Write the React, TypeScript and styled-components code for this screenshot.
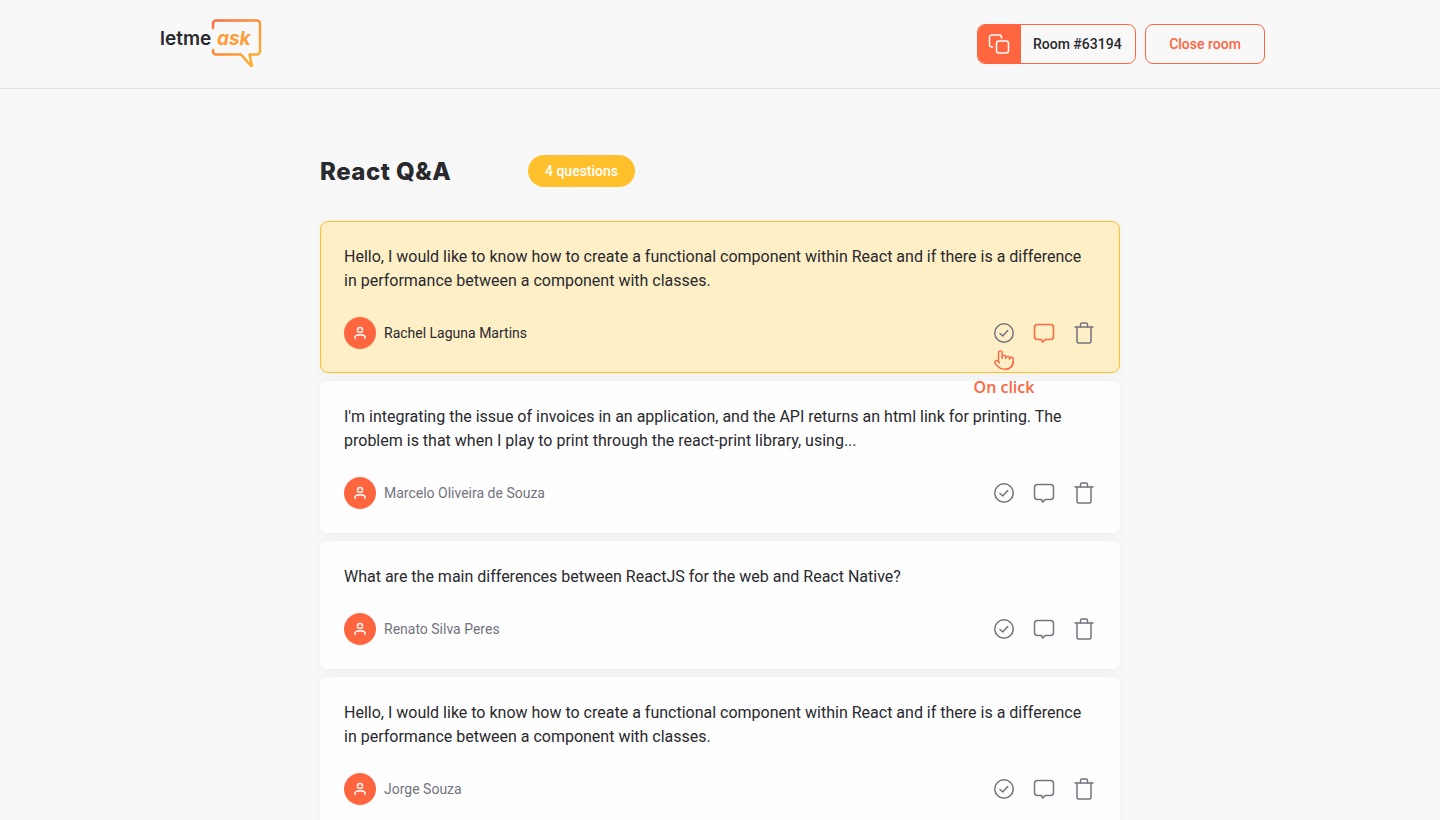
import React from "react";
import styled, { createGlobalStyle } from "styled-components";
import { Pointer } from "lucide-react";

const Global = createGlobalStyle`
  * { box-sizing: border-box; }
  html, body { margin: 0; padding: 0; height: 100%; overflow: hidden; background: #f8f8f8; }
  body { font-family: Roboto, "Liberation Sans", sans-serif; color: #29292e; }
`;

const Page = styled.div`
  height: 820px;
  overflow: hidden;
`;
const Header = styled.header`
  height: 89px;
  border-bottom: 1px solid #e2e2e2;
  padding: 0 175px 0 159px;
  display: flex;
  align-items: center;
  justify-content: space-between;
`;
const Logo = styled.div`
  position: relative;
  width: 104px;
  height: 50px;
`;
const LogoWord = styled.span<{ $accent?: boolean }>`
  position: absolute;
  top: 8px;
  left: ${(p) => (p.$accent ? "58px" : "1px")};
  font-family: Inter, "Open Sans", sans-serif;
  font-size: 19px;
  line-height: 24px;
  font-weight: ${(p) => (p.$accent ? 700 : 600)};
  font-style: ${(p) => (p.$accent ? "italic" : "normal")};
  color: ${(p) => (p.$accent ? "#ff9d3a" : "#29292e")};
`;
const LogoBubble = styled.svg`
  position: absolute;
  inset: 0;
`;
const Actions = styled.div`
  display: flex;
  gap: 9px;
`;
const RoomCode = styled.div`
  width: 159px;
  height: 40px;
  display: flex;
  border: 1px solid #ff6640;
  border-radius: 8px;
  overflow: hidden;
`;
const CopyBox = styled.div`
  width: 44px;
  margin: -1px 0 -1px -1px;
  background: #ff6640;
  display: flex;
  align-items: center;
  justify-content: center;
`;
const RoomLabel = styled.span`
  flex: 1;
  padding-left: 12px;
  font-size: 14px;
  font-weight: 500;
  line-height: 38px;
  color: #29292e;
`;
const CloseButton = styled.button`
  width: 120px;
  height: 40px;
  border: 1px solid #ff6640;
  border-radius: 8px;
  background: transparent;
  color: #ff6640;
  font-family: Roboto, sans-serif;
  font-size: 14px;
  font-weight: 500;
`;
const Main = styled.main`
  width: 800px;
  margin: 0 auto;
  padding-top: 66px;
`;
const TitleRow = styled.div`
  height: 32px;
  display: flex;
  align-items: center;
  margin-bottom: 34px;
`;
const Title = styled.h1`
  width: 208px;
  margin: 0;
  font-family: Inter, sans-serif;
  font-size: 24px;
  font-weight: 800;
  letter-spacing: 0.5px;
  color: #29292e;
`;
const Badge = styled.span`
  width: 107px;
  height: 32px;
  border-radius: 16px;
  background: #ffc02c;
  color: #fff;
  font-size: 14px;
  font-weight: 500;
  line-height: 32px;
  text-align: center;
`;
const List = styled.div`
  display: flex;
  flex-direction: column;
  gap: 8px;
`;
const Card = styled.article<{ $active?: boolean }>`
  position: relative;
  z-index: ${(p) => (p.$active ? 1 : 0)};
  border-radius: 8px;
  background: ${(p) => (p.$active ? "#feefc6" : "#fefefe")};
  border: ${(p) => (p.$active ? "1px solid #ffc02c" : "none")};
  padding: ${(p) => (p.$active ? "23px" : "24px")};
  box-shadow: 0 2px 12px rgba(0, 0, 0, 0.04);
`;
const Question = styled.p`
  margin: 0 0 24px;
  font-size: 16px;
  line-height: 24px;
  color: #29292e;
`;
const Footer = styled.div`
  height: 32px;
  display: flex;
  align-items: center;
  justify-content: space-between;
`;
const Author = styled.div`
  display: flex;
  align-items: center;
  gap: 8px;
`;
const Avatar = styled.div`
  width: 32px;
  height: 32px;
  border-radius: 50%;
  background: #ff6640;
  display: flex;
  align-items: center;
  justify-content: center;
`;
const AuthorName = styled.span<{ $active?: boolean }>`
  font-size: 14px;
  color: ${(p) => (p.$active ? "#29292e" : "#737380")};
`;
const IconRow = styled.div`
  display: flex;
  gap: 16px;
`;
const IconSlot = styled.svg`
  display: block;
  width: 24px;
  height: 24px;
  fill: none;
  stroke-width: 1.5;
  stroke-linecap: round;
  stroke-linejoin: round;
`;
const ClickHint = styled.div`
  position: absolute;
  left: 652px;
  top: 127px;
  width: 62px;
  display: flex;
  flex-direction: column;
  align-items: center;
  color: #ff6640;
`;
const HintLabel = styled.span`
  margin-top: 6px;
  font-family: "Open Sans", sans-serif;
  font-size: 16px;
  font-weight: 600;
  line-height: 20px;
  white-space: nowrap;
`;

const CheckIcon = () => (
  <IconSlot viewBox="0 0 24 24" stroke="#737380">
    <circle cx="12" cy="12" r="9.25" />
    <path d="M8 12.5l2.7 2.4 5-5.4" />
  </IconSlot>
);
const ChatIcon = ({ color }: { color: string }) => (
  <IconSlot viewBox="0 0 24 24" stroke={color}>
    <path d="M5.5 3.5h13a3 3 0 0 1 3 3v9a3 3 0 0 1-3 3h-5.2l-2.8 2.6-.9-2.6H5.5a3 3 0 0 1-3-3v-9a3 3 0 0 1 3-3z" />
  </IconSlot>
);
const TrashIcon = () => (
  <IconSlot viewBox="0 0 24 24" stroke="#737380">
    <path d="M3 6h18" />
    <path d="M5 6v14.5a1.5 1.5 0 0 0 1.5 1.5h11a1.5 1.5 0 0 0 1.5-1.5V6" />
    <path d="M8.5 6V3.5A1.5 1.5 0 0 1 10 2h4a1.5 1.5 0 0 1 1.5 1.5V6" />
  </IconSlot>
);
const CopyIcon = () => (
  <IconSlot viewBox="0 0 24 24" stroke="#fff">
    <rect x="9.5" y="9" width="12" height="12" rx="2.5" />
    <path d="M5.5 15H5a2.5 2.5 0 0 1-2.5-2.5V5.5A2.5 2.5 0 0 1 5 3h7a2.5 2.5 0 0 1 2.5 2.5V6" />
  </IconSlot>
);
const UserIcon = () => (
  <IconSlot viewBox="0 0 24 24" stroke="#fff" style={{ width: 16, height: 16 }}>
    <circle cx="12" cy="7.5" r="3.8" strokeWidth="2" />
    <path d="M4.5 20.5v-1.5a4 4 0 0 1 4-4h7a4 4 0 0 1 4 4v1.5" strokeWidth="2" />
  </IconSlot>
);

type Q = { text: React.ReactNode; name: string; active?: boolean };
const questions: Q[] = [
  {
    text: (
      <>
        Hello, I would like to know how to create a functional component within React and if there is a difference
        <br />
        in performance between a component with classes.
      </>
    ),
    name: "Rachel Laguna Martins",
    active: true,
  },
  {
    text: (
      <>
        I'm integrating the issue of invoices in an application, and the API returns an html link for printing. The
        <br />
        problem is that when I play to print through the react-print library, using...
      </>
    ),
    name: "Marcelo Oliveira de Souza",
  },
  {
    text: "What are the main differences between ReactJS for the web and React Native?",
    name: "Renato Silva Peres",
  },
  {
    text: (
      <>
        Hello, I would like to know how to create a functional component within React and if there is a difference
        <br />
        in performance between a component with classes.
      </>
    ),
    name: "Jorge Souza",
  },
];

export default function App() {
  return (
    <Page>
      <Global />
      <Header>
        <Logo>
          <LogoBubble viewBox="0 0 104 50" width="104" height="50" fill="none">
            <defs>
              <linearGradient id="lg" x1="0" y1="0" x2="1" y2="1">
                <stop offset="0" stopColor="#ff6d3f" />
                <stop offset="1" stopColor="#ffb52e" />
              </linearGradient>
            </defs>
            <path
              d="M54 9V4.5a3 3 0 0 1 3-3h41a3 3 0 0 1 3 3v28a3 3 0 0 1-3 3h-7.5l2.4 11-.8.4L82 35.5H57a3 3 0 0 1-3-3V31"
              stroke="url(#lg)"
              strokeWidth="2.4"
              strokeLinecap="round"
              strokeLinejoin="round"
            />
          </LogoBubble>
          <LogoWord>letme</LogoWord>
          <LogoWord $accent>ask</LogoWord>
        </Logo>
        <Actions>
          <RoomCode>
            <CopyBox>
              <CopyIcon />
            </CopyBox>
            <RoomLabel>Room #63194</RoomLabel>
          </RoomCode>
          <CloseButton>Close room</CloseButton>
        </Actions>
      </Header>
      <Main>
        <TitleRow>
          <Title>React Q&amp;A</Title>
          <Badge>4 questions</Badge>
        </TitleRow>
        <List>
          {questions.map((q) => (
            <Card key={q.name} $active={q.active}>
              <Question>{q.text}</Question>
              <Footer>
                <Author>
                  <Avatar>
                    <UserIcon />
                  </Avatar>
                  <AuthorName $active={q.active}>{q.name}</AuthorName>
                </Author>
                <IconRow>
                  <CheckIcon />
                  <ChatIcon color={q.active ? "#ff6640" : "#737380"} />
                  <TrashIcon />
                </IconRow>
              </Footer>
              {q.active && (
                <ClickHint>
                  <Pointer size={22} strokeWidth={1.5} />
                  <HintLabel>On click</HintLabel>
                </ClickHint>
              )}
            </Card>
          ))}
        </List>
      </Main>
    </Page>
  );
}
